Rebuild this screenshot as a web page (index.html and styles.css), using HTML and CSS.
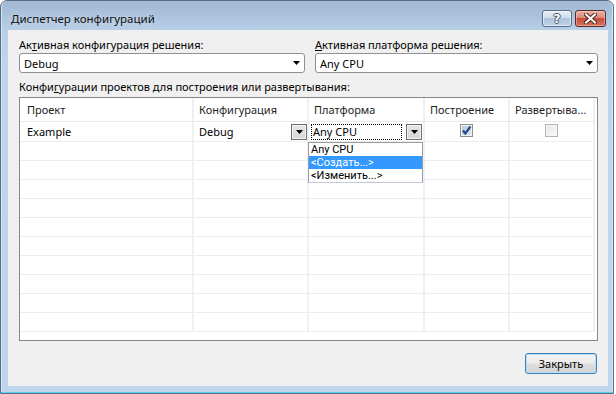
FILE: index.html
```html
<!DOCTYPE html>
<html lang="ru">
<head>
<meta charset="utf-8">
<title>Диспетчер конфигураций</title>
<link rel="stylesheet" href="styles.css">
</head>
<body>
<div class="window">
  <div class="titlebar">
    <span class="title">Диспетчер конфигураций</span>
    <div class="caption-buttons">
      <div class="cbtn help"><span class="q">?</span></div>
      <div class="cbtn close">
        <svg width="13" height="11" viewBox="0 0 13 11">
          <path d="M2 1.5 L11 9.5 M11 1.5 L2 9.5" stroke="#4a2620" stroke-width="4" stroke-linecap="square" fill="none"/>
          <path d="M2 1.5 L11 9.5 M11 1.5 L2 9.5" stroke="#ffffff" stroke-width="2" stroke-linecap="square" fill="none"/>
        </svg>
      </div>
    </div>
  </div>
  <div class="client">
    <div class="top-row">
      <div class="field">
        <div class="label">Ак<u>т</u>ивная конфигурация решения:</div>
        <div class="combo"><span>Debug</span><svg class="arrow" width="7" height="4" viewBox="0 0 7 4"><path d="M0 0h7l-3.5 4z" fill="#000"/></svg></div>
      </div>
      <div class="field">
        <div class="label"><u>А</u>ктивная платформа решения:</div>
        <div class="combo"><span>Any CPU</span><svg class="arrow" width="7" height="4" viewBox="0 0 7 4"><path d="M0 0h7l-3.5 4z" fill="#000"/></svg></div>
      </div>
    </div>
    <div class="label label2">Конфи<u>г</u>урации проектов для построения или развертывания:</div>
    <div class="grid">
      <div class="row header">
        <div class="cell c1">Проект</div>
        <div class="cell">Конфигурация</div>
        <div class="cell">Платформа</div>
        <div class="cell">Построение</div>
        <div class="cell">Развертыва...</div>
      </div>
      <div class="row first">
        <div class="cell c1">Example</div>
        <div class="cell split"><span>Debug</span><div class="dbtn"><svg width="7" height="4" viewBox="0 0 7 4"><path d="M0 0h7l-3.5 4z" fill="#000"/></svg></div></div>
        <div class="cell split tight"><span class="focus">Any CPU</span><div class="dbtn"><svg width="7" height="4" viewBox="0 0 7 4"><path d="M0 0h7l-3.5 4z" fill="#000"/></svg></div></div>
        <div class="cell center"><div class="chk checked"><svg width="11" height="11" viewBox="0 0 11 11"><path d="M2 5.5 L4.3 8.5 L9.5 1.5" stroke="#23478f" stroke-width="2.2" fill="none"/></svg></div></div>
        <div class="cell center"><div class="chk disabled"></div></div>
      </div>
      <div class="row"><div class="cell c1"></div><div class="cell"></div><div class="cell"></div><div class="cell"></div><div class="cell"></div></div>
      <div class="row"><div class="cell c1"></div><div class="cell"></div><div class="cell"></div><div class="cell"></div><div class="cell"></div></div>
      <div class="row"><div class="cell c1"></div><div class="cell"></div><div class="cell"></div><div class="cell"></div><div class="cell"></div></div>
      <div class="row"><div class="cell c1"></div><div class="cell"></div><div class="cell"></div><div class="cell"></div><div class="cell"></div></div>
      <div class="row"><div class="cell c1"></div><div class="cell"></div><div class="cell"></div><div class="cell"></div><div class="cell"></div></div>
      <div class="row"><div class="cell c1"></div><div class="cell"></div><div class="cell"></div><div class="cell"></div><div class="cell"></div></div>
      <div class="row"><div class="cell c1"></div><div class="cell"></div><div class="cell"></div><div class="cell"></div><div class="cell"></div></div>
      <div class="row"><div class="cell c1"></div><div class="cell"></div><div class="cell"></div><div class="cell"></div><div class="cell"></div></div>
      <div class="row"><div class="cell c1"></div><div class="cell"></div><div class="cell"></div><div class="cell"></div><div class="cell"></div></div>
      <div class="row last"><div class="cell c1"></div><div class="cell"></div><div class="cell"></div><div class="cell"></div><div class="cell"></div></div>
      <div class="dropdown-list">
        <div class="item">Any CPU</div>
        <div class="item selected">&lt;Создать...&gt;</div>
        <div class="item">&lt;Изменить...&gt;</div>
      </div>
    </div>
    <div class="footer">
      <button class="btn">Закрыть</button>
    </div>
  </div>
</div>
</body>
</html>
```
FILE: styles.css
```css
html, body {
  margin: 0;
  padding: 0;
  background: #ffffff;
}

body {
  font-family: "Noto Sans", "Open Sans", sans-serif;
  font-size: 11px;
  color: #000;
  width: 616px;
  height: 394px;
  overflow: hidden;
}

.window {
  width: 614px;
  height: 394px;
  box-sizing: border-box;
  border: 1px solid #5b6d84;
  border-radius: 7px 7px 0 0;
  background: linear-gradient(to bottom, #a2b9d3 0, #abc2dc 14px, #b8cfe8 29px, #bed4eb 60px, #bfd5ec 100%);
  box-shadow: inset 0 -1px 0 #56d2ea, inset 1px 0 0 #d8e6f4, inset -1px 0 0 #d8e6f4;
  padding: 0 5px 7px 7px;
  display: flex;
  flex-direction: column;
}

.titlebar {
  height: 29px;
  display: flex;
  justify-content: space-between;
  align-items: flex-start;
}

.title {
  margin: 10px 0 0 3px;
  font-size: 11.5px;
  line-height: 16px;
  color: #101010;
  text-shadow: 0 0 6px rgba(255, 255, 255, 0.6);
}

.caption-buttons {
  display: flex;
  gap: 3px;
  margin: 9px 2px 0 0;
}

.cbtn {
  height: 17px;
  box-sizing: border-box;
  border-radius: 3px;
  display: flex;
  align-items: center;
  justify-content: center;
}

.help {
  width: 30px;
  border: 1px solid #566c88;
  background: linear-gradient(to bottom, #e6eef7 0%, #cfdcea 45%, #aec4dc 50%, #bed3e8 100%);
  box-shadow: inset 0 0 0 1px rgba(255, 255, 255, 0.55);
}

.q {
  font-family: "DejaVu Sans", sans-serif;
  font-weight: bold;
  font-size: 12px;
  line-height: 14px;
  color: #ffffff;
  text-shadow: -1px 0 0 #44566e, 1px 0 0 #44566e, 0 -1px 0 #44566e, 0 1px 0 #44566e;
}

.close {
  width: 31px;
  border: 1px solid #5b2a22;
  background: linear-gradient(to bottom, #eab1a4 0%, #dc8878 45%, #c64f3b 50%, #d5715a 100%);
  box-shadow: inset 0 0 0 1px rgba(255, 220, 210, 0.45);
}

.client {
  flex: 1;
  background: #f0f0f0;
  padding: 7px 10px 12px 11px;
  display: flex;
  flex-direction: column;
}

.label {
  line-height: 15px;
  height: 15px;
  white-space: nowrap;
}

.label u {
  text-decoration: underline;
  text-underline-offset: 1px;
}

.top-row {
  display: grid;
  grid-template-columns: 286px 283px;
  column-gap: 10px;
}

.combo {
  margin-top: 1px;
  height: 20px;
  box-sizing: border-box;
  border: 1px solid #8f9091;
  border-radius: 3px;
  background: #ffffff;
  padding: 0 4px 0 4px;
  display: flex;
  align-items: center;
  justify-content: space-between;
  line-height: 15px;
}

.label2 {
  margin-top: 6px;
}

.grid {
  margin-top: 3px;
  height: 244px;
  box-sizing: border-box;
  border: 1px solid #828790;
  background: #ffffff;
  position: relative;
  overflow: hidden;
}

.row {
  display: grid;
  grid-template-columns: 174px 115px 116px 85px 85px;
  height: 19px;
  box-sizing: border-box;
  border-bottom: 1px solid #ededed;
  width: 575px;
}

.row.header {
  height: 24px;
  border-bottom-color: #e8e8e8;
}

.row.first {
  height: 20px;
}

.cell {
  border-right: 2px solid #edf0f5;
  padding-left: 5px;
  display: flex;
  align-items: center;
  line-height: 15px;
  white-space: nowrap;
  overflow: visible;
  min-width: 0;
}

.cell.c1 {
  padding-left: 7px;
}

.header .cell {
  color: #1e1e1e;
}

.cell.split {
  justify-content: space-between;
  padding-right: 0;
}

.cell.tight {
  padding-left: 2px;
  padding-right: 1px;
}

.cell.center {
  justify-content: center;
  padding-left: 0;
}

.dbtn {
  width: 16px;
  height: 16px;
  box-sizing: border-box;
  border: 1px solid #6f6f6f;
  background: linear-gradient(to bottom, #e6e6e6 0%, #d6d6d6 100%);
  box-shadow: inset 0 0 0 1px #f2f2f2;
  display: flex;
  align-items: center;
  justify-content: center;
}

.focus {
  width: 91px;
  height: 16px;
  box-sizing: border-box;
  border: 1px dotted #000;
  padding-left: 1px;
  line-height: 14px;
}

.chk {
  width: 13px;
  height: 13px;
  box-sizing: border-box;
  display: flex;
  align-items: center;
  justify-content: center;
  margin-top: -3px;
}

.chk.checked {
  border: 1px solid #8e8f8f;
  background: linear-gradient(135deg, #b8c6d6 0%, #dde6f0 100%);
  box-shadow: inset 0 0 0 1px #f4f4f4;
}

.chk.disabled {
  border: 1px solid #b1b1b1;
  background: linear-gradient(135deg, #e6e6e6 0%, #fafafa 100%);
  box-shadow: inset 0 0 0 1px #f7f7f7;
}

.dropdown-list {
  position: absolute;
  left: 288px;
  top: 44px;
  width: 115px;
  box-sizing: border-box;
  border: 1px solid #979ca6;
  border-bottom-color: #c3c8d4;
  background: #ffffff;
}

.item {
  height: 13px;
  line-height: 13px;
  padding-left: 2px;
  white-space: nowrap;
  font-family: Roboto, "Noto Sans", sans-serif;
  font-size: 11px;
}

.item.selected {
  background: #3399ff;
  color: #ffffff;
}

.footer {
  margin-top: 12px;
  display: flex;
  justify-content: flex-end;
}

.btn {
  width: 72px;
  height: 21px;
  margin-right: 1px;
  box-sizing: border-box;
  border: 1px solid #3c7fb1;
  border-radius: 3px;
  background: linear-gradient(to bottom, #f4f4f4 0%, #ececec 48%, #dedede 52%, #d4d4d4 100%);
  box-shadow: inset 0 0 0 1px #b5e1f6;
  font-family: "Noto Sans", "Open Sans", sans-serif;
  font-size: 11px;
  line-height: 15px;
  color: #000;
  padding: 0;
}
```
